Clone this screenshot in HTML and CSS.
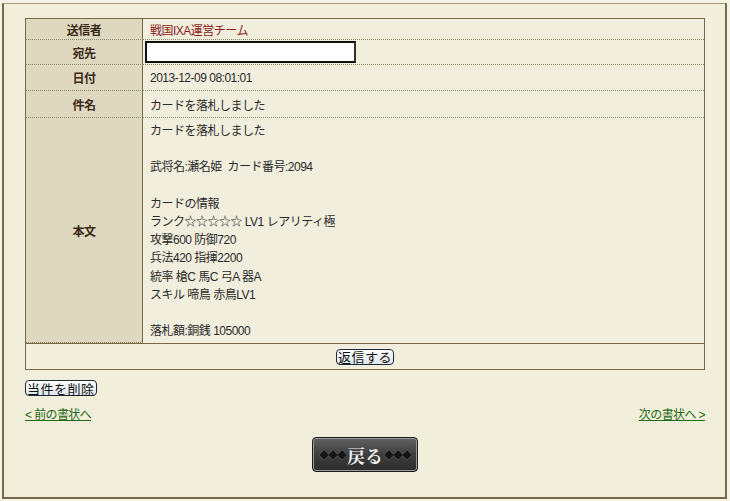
FILE: index.html
```html
<!DOCTYPE html>
<html lang="ja">
<head>
    <meta charset="UTF-8" />
    <title>書状</title>
    <link rel="stylesheet" href="styles.css">
</head>
<body>
    <div class="page">
        <div class="mail">
            <div class="fields">
                <div class="row row-from">
                    <div class="label">送信者</div>
                    <div class="value sender">戦国IXA運営チーム</div>
                </div>
                <div class="row row-to">
                    <div class="label">宛先</div>
                    <div class="value"><input type="text" class="to-input" /></div>
                </div>
                <div class="row row-date">
                    <div class="label">日付</div>
                    <div class="value">2013-12-09 08:01:01</div>
                </div>
                <div class="row row-subject">
                    <div class="label">件名</div>
                    <div class="value">カードを落札しました</div>
                </div>
                <div class="row row-body">
                    <div class="label">本文</div>
                    <div class="value body-text">カードを落札しました

武将名:瀬名姫&nbsp; カード番号:2094

カードの情報
ランク☆☆☆☆☆ LV1 レアリティ極
攻撃600 防御720
兵法420 指揮2200
統率 槍C 馬C 弓A 器A
スキル 啼鳥 赤鳥LV1

落札額:銅銭 105000</div>
                </div>
            </div>
            <div class="reply-row">
                <button class="btn">返信する</button>
            </div>
        </div>

        <div class="delete-row">
            <button class="btn">当件を削除</button>
        </div>

        <div class="pager">
            <a href="#">&lt;&nbsp;前の書状へ</a>
            <a href="#">次の書状へ&nbsp;&gt;</a>
        </div>

        <div class="back-row">
            <a href="#" class="back-btn"><span class="deco">◆◆◆</span>戻る<span class="deco">◆◆◆</span></a>
        </div>
    </div>
</body>
</html>
```

FILE: styles.css
```css
:root {
    --page-bg: #f1efdc;
    --label-bg: #ddd8bf;
    --value-bg: #f1eedd;
    --line: #76694a;
    --dots: #8d8567;
    --text: #2a2a2a;
    --label-text: #3b2a18;
    --sender: #8c1c1c;
    --link: #1f6a12;
}

* {
    box-sizing: border-box;
}

body {
    margin: 0;
    background: #f5f3e4;
    font-family: "Liberation Sans", "Noto Sans CJK JP", sans-serif;
    font-size: 12px;
    color: var(--text);
}

.page {
    margin: 3px 3px 2px 2px;
    height: 496px;
    background: var(--page-bg);
    border: 2px solid var(--line);
    border-top: 1px solid #a39b7c;
    padding: 14px 20px 0 21px;
}

.mail {
    border: 1px solid var(--line);
    background: var(--value-bg);
}

.fields {
    border-bottom: 1px solid var(--line);
}

.row {
    display: flex;
}

.label {
    width: 117px;
    flex-shrink: 0;
    background: var(--label-bg);
    border-right: 1px solid var(--line);
    border-bottom: 1px dotted var(--dots);
    display: flex;
    align-items: center;
    justify-content: center;
    font-weight: bold;
    color: var(--label-text);
    letter-spacing: -0.5px;
}

.value {
    flex: 1;
    border-bottom: 1px dotted var(--dots);
    display: flex;
    align-items: center;
    padding-left: 7px;
    letter-spacing: -0.5px;
}

.row-from { height: 21px; }
.row-to { height: 25px; }
.row-date { height: 26px; }
.row-subject { height: 27px; }
.row-body { height: 225px; }

.row-to .value {
    padding-left: 2px;
}

.row-body .value {
    border-bottom: none;
    display: block;
    white-space: pre-line;
    line-height: 18.2px;
    padding-top: 4px;
}

.sender {
    color: var(--sender);
}

.to-input {
    width: 211px;
    height: 22px;
    border: 2px solid #111;
    border-right-color: #333;
    background: #fff;
    margin: 0;
}

.reply-row {
    height: 25px;
    display: flex;
    justify-content: center;
    align-items: center;
}

.btn {
    font-family: "Noto Sans CJK JP", sans-serif;
    font-size: 13px;
    line-height: 13px;
    height: 16px;
    padding: 0 1px;
    color: #111;
    background: linear-gradient(#ffffff, #dfe6ee);
    border: 1px solid #1d2a3a;
    border-radius: 4px;
    letter-spacing: 0.5px;
}

.delete-row {
    margin-top: 10px;
    height: 16px;
}

.pager {
    display: flex;
    justify-content: space-between;
    margin-top: 9px;
}

.pager a {
    color: var(--link);
    letter-spacing: -0.6px;
}

.back-row {
    display: flex;
    justify-content: center;
    margin-top: 15px;
}

.back-btn {
    width: 106px;
    height: 35px;
    display: flex;
    align-items: center;
    justify-content: center;
    border-radius: 4px;
    border: 1px solid #1c1c1c;
    box-shadow: inset 0 0 0 1px #9a9a9a;
    background: linear-gradient(#606060, #3e3e3e 50%, #2c2c2c);
    color: #f2f2f2;
    font-size: 18px;
    font-weight: bold;
    text-decoration: none;
    font-family: "Noto Serif CJK JP", "Noto Sans CJK JP", serif;
}

.deco {
    font-size: 10px;
    color: #151515;
    letter-spacing: -1px;
    text-shadow: 0 0 1px #999;
    margin: 0 1px;
}
```
